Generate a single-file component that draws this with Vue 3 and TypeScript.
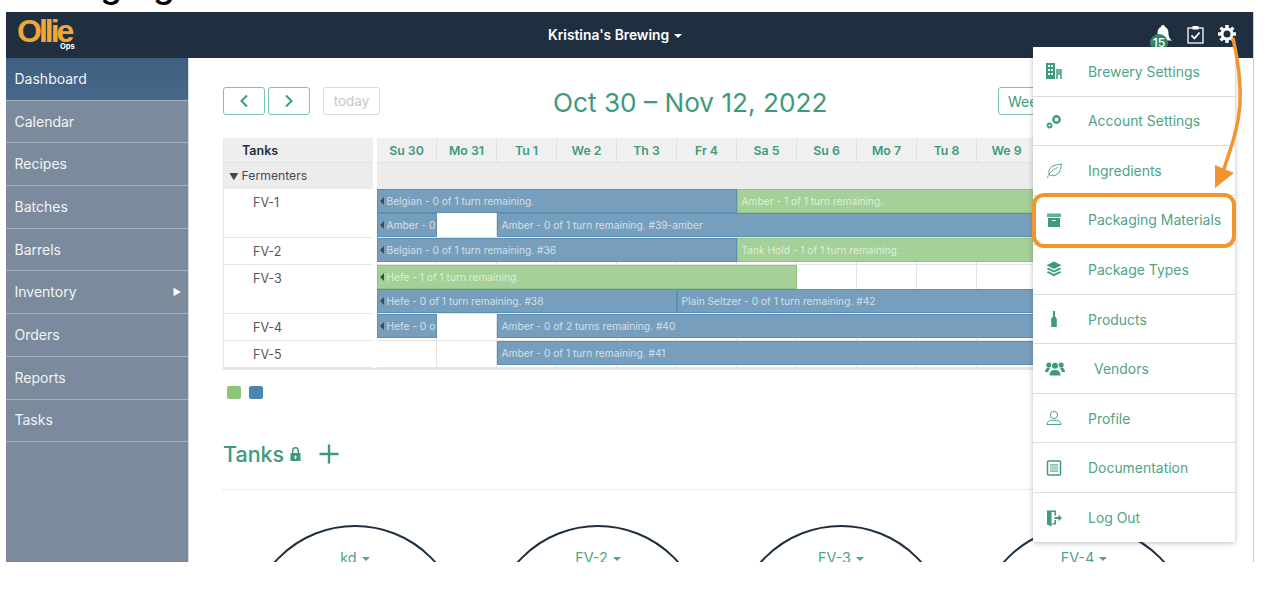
<script setup lang="ts">
interface Bar { from: number; span: number; text: string; kind: 'blue' | 'green' | 'gap'; arrow?: boolean; clip?: boolean }
interface Row { name: string; h: number; lanes: Bar[][] }

const days = ['Su 30','Mo 31','Tu 1','We 2','Th 3','Fr 4','Sa 5','Su 6','Mo 7','Tu 8','We 9','Th 10','Fr 11','Sa 12']
const rows: Row[] = [
  { name: 'FV-1', h: 49, lanes: [
    [ { from: 1, span: 6, text: 'Belgian - 0 of 1 turn remaining.', kind: 'blue', arrow: true },
      { from: 7, span: 8, text: 'Amber - 1 of 1 turn remaining.', kind: 'green' } ],
    [ { from: 1, span: 1, text: 'Amber - 0 of 1', kind: 'blue', arrow: true, clip: true },
      { from: 3, span: 12, text: 'Amber - 0 of 1 turn remaining. #39-amber', kind: 'blue' } ] ] },
  { name: 'FV-2', h: 27, lanes: [
    [ { from: 1, span: 6, text: 'Belgian - 0 of 1 turn remaining. #36', kind: 'blue', arrow: true },
      { from: 7, span: 8, text: 'Tank Hold - 1 of 1 turn remaining.', kind: 'green' } ] ] },
  { name: 'FV-3', h: 49, lanes: [
    [ { from: 1, span: 7, text: 'Hefe - 1 of 1 turn remaining.', kind: 'green', arrow: true } ],
    [ { from: 1, span: 5, text: 'Hefe - 0 of 1 turn remaining. #38', kind: 'blue', arrow: true },
      { from: 6, span: 9, text: 'Plain Seltzer - 0 of 1 turn remaining. #42', kind: 'blue' } ] ] },
  { name: 'FV-4', h: 27, lanes: [
    [ { from: 1, span: 1, text: 'Hefe - 0 of 1', kind: 'blue', arrow: true, clip: true },
      { from: 3, span: 12, text: 'Amber - 0 of 2 turns remaining. #40', kind: 'blue' } ] ] },
  { name: 'FV-5', h: 27, lanes: [
    [ { from: 3, span: 12, text: 'Amber - 0 of 1 turn remaining. #41', kind: 'blue' } ] ] },
]
const nav = ['Dashboard','Calendar','Recipes','Batches','Barrels','Inventory','Orders','Reports','Tasks']
const tanks = ['kd','FV-2','FV-3','FV-4']
const menu = [
  { label: 'Brewery Settings', icon: 'building' },
  { label: 'Account Settings', icon: 'cogs' },
  { label: 'Ingredients', icon: 'leaf' },
  { label: 'Packaging Materials', icon: 'box' },
  { label: 'Package Types', icon: 'layers' },
  { label: 'Products', icon: 'bottle' },
  { label: 'Vendors', icon: 'users' },
  { label: 'Profile', icon: 'profile' },
  { label: 'Documentation', icon: 'doc' },
  { label: 'Log Out', icon: 'logout' },
]
const teeth = [0, 45, 90, 135, 180, 225, 270, 315]
const barStyle = (b: Bar) => ({ gridColumn: `${b.from} / span ${b.span}` })
</script>

<template>
  <div class="stage">
    <div class="clipped-title"><span>Managing</span></div>
    <div class="app">
      <header class="topbar">
        <div class="logo"><span class="logo-word">Ollie</span><span class="logo-sub">Ops</span></div>
        <div class="brand">Kristina's Brewing <i class="caret white"></i></div>
        <div class="tools">
          <span class="bell">
            <svg width="20" height="18" viewBox="0 0 20 18"><path fill="#fff" d="M10 0a2 2 0 0 0-2 2C5 3.200 4.500 6 4.500 9c0 3-1.500 5-3.500 6.500h18c-2-1.500-3.500-3.500-3.500-6.500 0-3-.5-5.800-3.500-7a2 2 0 0 0-2-2z"/></svg>
            <b class="badge">15</b>
          </span>
          <svg width="17" height="19" viewBox="0 0 17 19" fill="none" stroke="#fff"><rect x="1" y="3" width="15" height="15" stroke-width="1.300"/><rect x="5.500" y="1" width="6" height="3.500" fill="#fff" stroke="none"/><path d="M4.500 10.500l3 3 5-6" stroke-width="1.800"/></svg>
          <svg width="18" height="18" viewBox="-9 -9 18 18">
            <circle r="5" fill="none" stroke="#fff" stroke-width="3"/>
            <rect v-for="t in teeth" :key="t" x="-1.700" y="-9" width="3.400" height="3.500" fill="#fff" :transform="`rotate(${t})`"/>
          </svg>
        </div>
      </header>

      <div class="body">
        <aside class="side">
          <a v-for="(n, i) in nav" :key="n" class="nav" :class="{ active: i === 0 }">
            {{ n }}<span v-if="n === 'Inventory'" class="tri">▶</span>
          </a>
        </aside>

        <main class="main">
          <div class="toolbar">
            <div class="left-group">
              <button class="btn nav-btn"><svg width="10" height="14" viewBox="0 0 10 14" fill="none" stroke="#3d9a7c" stroke-width="2"><path d="M8 1.500L2.500 7 8 12.500"/></svg></button>
              <button class="btn nav-btn"><svg width="10" height="14" viewBox="0 0 10 14" fill="none" stroke="#3d9a7c" stroke-width="2"><path d="M2 1.500L7.500 7 2 12.500"/></svg></button>
              <button class="btn today">today</button>
            </div>
            <h1 class="range">Oct 30 – Nov 12, 2022</h1>
            <button class="btn week">Week</button>
          </div>

          <div class="sched">
            <div class="cell-l head-l">Tanks</div>
            <div class="days"><div v-for="d in days" :key="d" class="day">{{ d }}</div></div>
            <div class="cell-l sect-l"><span class="down">▼</span>Fermenters</div>
            <div class="sect-r"></div>
            <template v-for="r in rows" :key="r.name">
              <div class="cell-l row-l" :style="{ height: r.h + 'px' }">{{ r.name }}</div>
              <div class="lanes" :style="{ height: r.h + 'px' }">
                <div v-for="(lane, li) in r.lanes" :key="li" class="lane">
                  <div v-for="b in lane" :key="b.from" class="bar" :class="b.kind" :style="barStyle(b)">
                    <i v-if="b.arrow" class="ev-arrow"></i>
                    <span class="bar-text">{{ b.text }}</span>
                  </div>
                </div>
              </div>
            </template>
          </div>

          <div class="legend"><i class="sw g"></i><i class="sw b"></i></div>

          <div class="tanks-head">
            <h2>Tanks</h2>
            <svg width="11" height="14" viewBox="0 0 11 14"><path fill="#3d9a7c" fill-rule="evenodd" d="M2 6V3.500a3.500 3.500 0 0 1 7 0V6h1.500v8H.5V6zm1.500 0h4V3.500a2 2 0 0 0-4 0zM5.500 8.500a1.200 1.200 0 0 0-.6 2.200V12h1.200v-1.300a1.200 1.200 0 0 0-.6-2.200z"/></svg>
            <svg class="plus" width="20" height="20" viewBox="0 0 20 20"><path stroke="#3d9a7c" stroke-width="2.400" d="M10 0.500v19M0.500 10h19"/></svg>
          </div>

          <div class="tank-row">
            <div v-for="t in tanks" :key="t" class="tank">
              <span class="tank-label">{{ t }} <i class="caret green"></i></span>
            </div>
          </div>
        </main>
      </div>

      <nav class="menu">
        <a v-for="m in menu" :key="m.label" class="menu-item">
          <span class="mi-icon">
            <svg class="mi-svg" width="18" height="18" viewBox="0 0 18 18">
              <g v-if="m.icon === 'building'" fill="#3d9a7c">
                <path fill-rule="evenodd" d="M1 1h9v16H1zM3 3v2h2V3zm3 0v2h2V3zM3 7v2h2V7zm3 0v2h2V7zM3 11v2h2v-2zm3 0v2h2v-2z"/>
                <path opacity=".75" d="M11 7h6v10h-2v-4h-2v4h-2z"/>
              </g>
              <g v-else-if="m.icon === 'cogs'" fill="none" stroke="#3d9a7c">
                <circle cx="11.500" cy="7.500" r="3.200" stroke-width="2.400"/>
                <circle cx="4.500" cy="13.500" r="2" stroke-width="1.800"/>
              </g>
              <g v-else-if="m.icon === 'leaf'" fill="none" stroke="#4fa584" stroke-width="1">
                <path d="M2.500 17C3 15 3.500 13.500 4.500 12.500M4.500 14C3 10.500 4.500 6.500 8 5c3-1.300 6-1.500 8.500-2C16 7 15.500 10.500 12.500 13c-2.500 2-5.500 2-8 1zM4.500 12.500C7 9.500 9.500 8 12.500 6.500"/>
              </g>
              <g v-else-if="m.icon === 'box'" fill="#3d9a7c">
                <path d="M2 2.500h14v3.500H2z" opacity=".8"/>
                <path fill-rule="evenodd" d="M3 7h12v9H3zm4 2v1h4V9z"/>
              </g>
              <g v-else-if="m.icon === 'layers'" fill="#3d9a7c">
                <path d="M9 1.500l7.500 3.700L9 9 1.500 5.200z"/>
                <path d="M3.500 7.700L9 10.500l5.500-2.800 2 1.100L9 12.600 1.500 8.800z"/>
                <path d="M3.500 11.200L9 14l5.500-2.800 2 1.100L9 16.200l-7.500-3.900z"/>
              </g>
              <g v-else-if="m.icon === 'bottle'" fill="#3d9a7c">
                <path d="M8 1h2v5c0 1 1.800 1.500 1.800 3.500V17H6.200V9.500C6.200 7.500 8 7 8 6z"/>
              </g>
              <g v-else-if="m.icon === 'users'" fill="#3d9a7c">
                <circle cx="10" cy="5.800" r="3"/>
                <path d="M4.500 15.500c0-4 2.300-5.600 5.500-5.600s5.500 1.600 5.500 5.600z"/>
                <circle cx="3.800" cy="5" r="2.500"/><circle cx="16.200" cy="5" r="2.500"/>
                <path d="M0 12c0-2.500 1.500-4.500 3.800-4.500l1.400.4C4 9.200 3.500 10.500 3.300 12zM20 12c0-2.500-1.500-4.500-3.800-4.500l-1.400.4c1.200 1.300 1.700 2.600 1.900 4.100z"/>
              </g>
              <g v-else-if="m.icon === 'profile'" fill="none" stroke="#4fa584" stroke-width="1">
                <circle cx="9" cy="6" r="3.600"/>
                <path d="M2 15.500c0-2.500 2-4.200 4.500-4.200h5c2.500 0 4.500 1.700 4.500 4.200z"/>
              </g>
              <g v-else-if="m.icon === 'doc'">
                <rect x="2.500" y="2" width="13" height="14" rx="1" fill="none" stroke="#3d9a7c" stroke-width="1.500"/>
                <path d="M5 5h8v8H5z" fill="#8fc4af"/>
                <path d="M5 7h8M5 9h8M5 11h8" stroke="#e8f3ee" stroke-width=".7"/>
              </g>
              <g v-else-if="m.icon === 'logout'" fill="#3d9a7c">
                <path d="M2 1.500h9v5H9.500V3H7l-.5.300V15L9.500 13.800V11H11v4.500H6.500V17.500L2 15.500z"/>
                <path d="M9.500 8h4V5.800L17 9l-3.500 3.200V10h-4z"/>
              </g>
            </svg>
          </span>
          <span class="mi-text" :class="{ shifted: m.icon === 'users' }">{{ m.label }}</span>
        </a>
      </nav>
    </div>

    <svg class="annot" width="1270" height="594" viewBox="0 0 1270 594" fill="none">
      <rect x="1034" y="195" width="200" height="51" rx="10" stroke="#f2952f" stroke-width="4" fill="none"/>
      <path d="M1233 38C1238 60 1241 85 1240 105 1238 130 1230 150 1223 172" stroke="#f2952f" stroke-width="3.500"/>
      <path d="M1215 165L1234 173 1215 188z" fill="#f2952f"/>
    </svg>
  </div>
</template>

<style>
html, body { margin: 0; background: #fff; }
</style>

<style scoped>
.stage { position: relative; width: 1270px; height: 594px; overflow: hidden; background: #fff; font-family: Inter, "Liberation Sans", sans-serif; }
.clipped-title { height: 12px; overflow: hidden; padding-left: 6px; }
.clipped-title span { display: block; margin-top: -34px; font: 500 35px/36px Inter, sans-serif; color: #000; letter-spacing: .4px; }

.app { position: relative; width: 1247px; height: 550px; margin-left: 6px; border-right: 1px solid #cfd0d4; overflow: hidden; }

.topbar { height: 46px; background: #1f2f40; display: flex; align-items: center; position: relative; }
.logo { width: 542px; flex: none; position: relative; height: 46px; }
.logo-word { position: absolute; left: 11px; top: 7px; font: 700 32px/24px "Liberation Sans", sans-serif; letter-spacing: -3px; color: #efa73a; }
.logo-sub { position: absolute; left: 54px; top: 31px; font: 700 7.500px/8px Inter, sans-serif; color: #fff; }
.brand { color: #fff; font-size: 13.800px; font-weight: 600; white-space: nowrap; }
.caret { display: inline-block; width: 0; height: 0; border-left: 4px solid transparent; border-right: 4px solid transparent; margin-left: 1px; vertical-align: 2px; }
.caret.white { border-top: 4px solid #fff; }
.caret.green { border-top: 4px solid #4fa584; }
.tools { margin-left: auto; display: flex; align-items: flex-start; gap: 14px; padding-right: 17px; align-self: flex-start; margin-top: 13px; }
.bell { position: relative; display: block; width: 20px; height: 18px; }
.badge { position: absolute; left: -3px; top: 9px; width: 18px; height: 18px; border-radius: 50%; background: #2f8a6c; color: #fff; font: 500 12px/18px Inter, sans-serif; text-align: center; }

.body { display: flex; height: 504px; }
.side { width: 183px; flex: none; background: #7b8b9d; border-right: 1px solid #d5d8dc; box-sizing: border-box; }
.nav { display: flex; justify-content: space-between; align-items: center; box-sizing: border-box; height: 42.700px; padding: 0 7px 1px 8.500px; border-bottom: 1.500px solid #a6b0bc; color: #f1f3f5; font-size: 14px; }
.nav.active { background: linear-gradient(#3f5f80, #48688b); }
.tri { font-size: 9px; color: #fff; }

.main { flex: 1; min-width: 0; padding: 29px 18px 0 34px; overflow: hidden; }
.toolbar { display: flex; height: 28px; align-items: center; }
.left-group { width: 330px; flex: none; display: flex; gap: 3px; }
.btn { box-sizing: border-box; height: 28px; background: #fff; border: 1.500px solid #7cc4ad; border-radius: 3px; font-family: inherit; padding: 0; display: flex; align-items: center; justify-content: center; }
.nav-btn { width: 42px; }
.today { width: 57px; margin-left: 10px; border-color: #dcdcdc; color: #c8c8c8; font-size: 13.500px; }
.range { margin: 2px 0 0; width: 274px; flex: none; font-size: 26.200px; font-weight: 400; color: #3d9a7c; white-space: nowrap; text-align: center; }
.week { margin-left: 171px; width: 70px; color: #3d9a7c; font-size: 14px; justify-content: flex-start; padding-left: 9px; }

.sched { display: grid; grid-template-columns: 150px 858px; column-gap: 4px; margin-top: 23px; border-bottom: 2px solid #e4e4e4; width: 1012px; }
.cell-l { box-sizing: border-box; padding-left: 19px; font-size: 12.500px; border-left: 1px solid #e8e8e8; }
.head-l { height: 24px; background: #eeeeee; font-weight: 600; color: #1f2f40; line-height: 25px; padding-left: 18px; }
.days { display: grid; grid-template-columns: repeat(14, 60px); background: #f0f0f0; height: 24px; }
.day { box-sizing: border-box; border-right: 1px solid #e0e0e0; font-size: 12.300px; font-weight: 600; color: #3d9a7c; text-align: center; line-height: 25px; white-space: nowrap; }
.sect-l { height: 27px; background: #ececec; border-top: 1px solid #e2e2e2; color: #4a4a4a; line-height: 26px; padding-left: 5px; font-size: 12.200px; }
.down { font-size: 9.500px; margin-right: 3px; color: #444; }
.sect-r { height: 27px; background: #ececec; border-top: 1px solid #e2e2e2; box-sizing: border-box; }
.row-l { padding-left: 29px; padding-top: 6px; color: #555; border-bottom: 1.500px solid #e6e6e6; line-height: 16px; background: #fff; }
.lanes { box-sizing: border-box; border-bottom: 1.500px solid #e6e6e6; background: repeating-linear-gradient(90deg, #fff 0 59px, #e3e3e3 59px 60px); background-size: 840px 100%; background-repeat: no-repeat; }
.lane { display: grid; grid-template-columns: repeat(14, 60px); height: 24.200px; }
.bar { box-sizing: border-box; height: 24.200px; min-width: 0; display: flex; align-items: center; overflow: hidden; font-size: 10.200px; padding-left: 3.500px; white-space: nowrap; border: 1px solid; }
.bar.blue { background: #779fbd; border-color: #5b8fb4; color: #d3dfe8; }
.bar.green { background: #a5d098; border-color: #8fc57f; color: #dfeed8; }
.ev-arrow { flex: none; width: 0; height: 0; border-top: 4px solid transparent; border-bottom: 4px solid transparent; border-right: 4px solid #3f4c55; margin-right: 3px; margin-left: -2px; }
.bar-text { flex: none; }

.legend { display: flex; gap: 8px; margin-top: 16px; padding-left: 4px; }
.sw { width: 14px; height: 13px; border-radius: 2px; display: block; }
.sw.g { background: #8cc47a; }
.sw.b { background: #4a86ad; }

.tanks-head { display: flex; align-items: center; margin-top: 40px; height: 30px; padding-bottom: 20px; border-bottom: 1px dotted #dadada; width: 1012px; }
.tanks-head h2 { margin: 0 6px 0 0; font-size: 21.500px; font-weight: 500; color: #3d9a7c; }
.plus { margin-left: 18px; }

.tank-row { display: flex; gap: 27px; padding-left: 24px; margin-top: 35px; }
.tank { box-sizing: border-box; width: 216px; height: 216px; flex: none; border: 2px solid #1f2f40; border-radius: 50%; text-align: center; padding-top: 20px; }
.tank-label { color: #4fa584; font-size: 14.400px; }

.menu { position: absolute; left: 1027px; top: 35px; width: 202px; background: #fff; box-shadow: 0 1px 5px rgba(40, 50, 70, .32); display: flex; flex-direction: column; }
.menu-item { box-sizing: border-box; height: 49.550px; display: flex; align-items: center; border-bottom: 1.500px solid #dcdce2; }
.menu-item:last-child { border-bottom: 0; }
.mi-icon { width: 55px; flex: none; padding-left: 12px; box-sizing: border-box; display: flex; }
.mi-svg { overflow: visible; }
.mi-text { color: #4fa584; font-size: 13.950px; white-space: nowrap; }
.mi-text.shifted { margin-left: 6px; }

.annot { position: absolute; left: 0; top: 0; pointer-events: none; }
</style>
